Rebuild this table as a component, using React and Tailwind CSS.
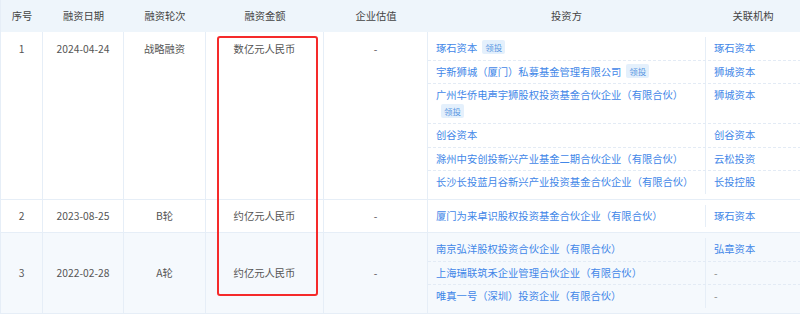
import React from "react";

const font = {
  fontFamily: '"Noto Sans CJK SC", "Noto Sans", sans-serif',
};

const rounds = [
  {
    id: 1,
    date: "2024-04-24",
    round: "战略融资",
    amount: "数亿元人民币",
    valuation: "-",
    align: "top",
    bg: "bg-white",
    investors: [
      { name: "琢石资本", lead: true, org: "琢石资本" },
      { name: "宇新狮城（厦门）私募基金管理有限公司", lead: true, org: "狮城资本" },
      { name: "广州华侨电声宇狮股权投资基金合伙企业（有限合伙）", lead: true, org: "狮城资本" },
      { name: "创谷资本", org: "创谷资本" },
      { name: "滁州中安创投新兴产业基金二期合伙企业（有限合伙）", org: "云松投资" },
      { name: "长沙长投蓝月谷新兴产业投资基金合伙企业（有限合伙）", org: "长投控股" },
    ],
  },
  {
    id: 2,
    date: "2023-08-25",
    round: "B轮",
    amount: "约亿元人民币",
    valuation: "-",
    align: "center",
    bg: "bg-white",
    investors: [{ name: "厦门为来卓识股权投资基金合伙企业（有限合伙）", org: "琢石资本" }],
  },
  {
    id: 3,
    date: "2022-02-28",
    round: "A轮",
    amount: "约亿元人民币",
    valuation: "-",
    align: "center",
    bg: "bg-[#f5f9fd]",
    investors: [
      { name: "南京弘洋股权投资合伙企业（有限合伙）", org: "弘章资本" },
      { name: "上海瑞联筑禾企业管理合伙企业（有限合伙）", org: "-" },
      { name: "唯真一号（深圳）投资企业（有限合伙）", org: "-" },
    ],
  },
];

const headers = ["序号", "融资日期", "融资轮次", "融资金额", "企业估值", "投资方", "关联机构"];

const Cell = ({ children, align }) => (
  <div
    className={`flex justify-center text-center border-r border-[#e6eef7] ${
      align === "top" ? "items-start pt-[5px]" : "items-center"
    }`}
  >
    <span className="leading-[23.5px]">{children}</span>
  </div>
);

export default function App() {
  return (
    <div
      className="relative w-[800px] h-[318px] overflow-hidden bg-white text-[10.3px] text-[#555]"
      style={font}
    >
      <div className="grid grid-cols-[42px_81px_82px_118px_104px_277px_96px] h-8 bg-[#eef5fb] text-[#444] border-l border-[#e6eef7]">
        {headers.map((h) => (
          <div key={h} className="flex items-center justify-center">
            {h}
          </div>
        ))}
      </div>

      {rounds.map((r) => (
        <div
          key={r.id}
          className={`grid grid-cols-[42px_81px_82px_118px_104px_373px] border-b border-l border-[#e6eef7] ${r.bg}`}
        >
          <Cell align={r.align}>{r.id}</Cell>
          <Cell align={r.align}>{r.date}</Cell>
          <Cell align={r.align}>{r.round}</Cell>
          <Cell align={r.align}>{r.amount}</Cell>
          <Cell align={r.align}>{r.valuation}</Cell>
          <div className="py-[5px]">
            {r.investors.map((inv, i) => (
              <div
                key={i}
                className={`grid grid-cols-[277px_96px] ${
                  i < r.investors.length - 1 ? "border-b border-dashed border-[#e3ebf5]" : ""
                }`}
              >
                <div className="pl-2 pr-1 py-[3px] leading-[16.5px] text-[#4287e8]">
                  {inv.name}
                  {inv.lead && (
                    <span className="inline-block ml-[5px] px-[3px] rounded-[2px] bg-[#e4f0fc] text-[8.5px] leading-[14px] text-[#5b98e2] align-[1px]">
                      领投
                    </span>
                  )}
                </div>
                <div
                  className={`border-l border-[#e6eef7] pl-2 py-[3px] leading-[16.5px] ${
                    inv.org === "-" ? "text-[#888]" : "text-[#4287e8]"
                  }`}
                >
                  {inv.org}
                </div>
              </div>
            ))}
          </div>
        </div>
      ))}

      <div className="absolute left-[217px] top-[36px] w-[101px] h-[260px] border-2 border-[#f52a2a] rounded-[3px]" />
    </div>
  );
}
